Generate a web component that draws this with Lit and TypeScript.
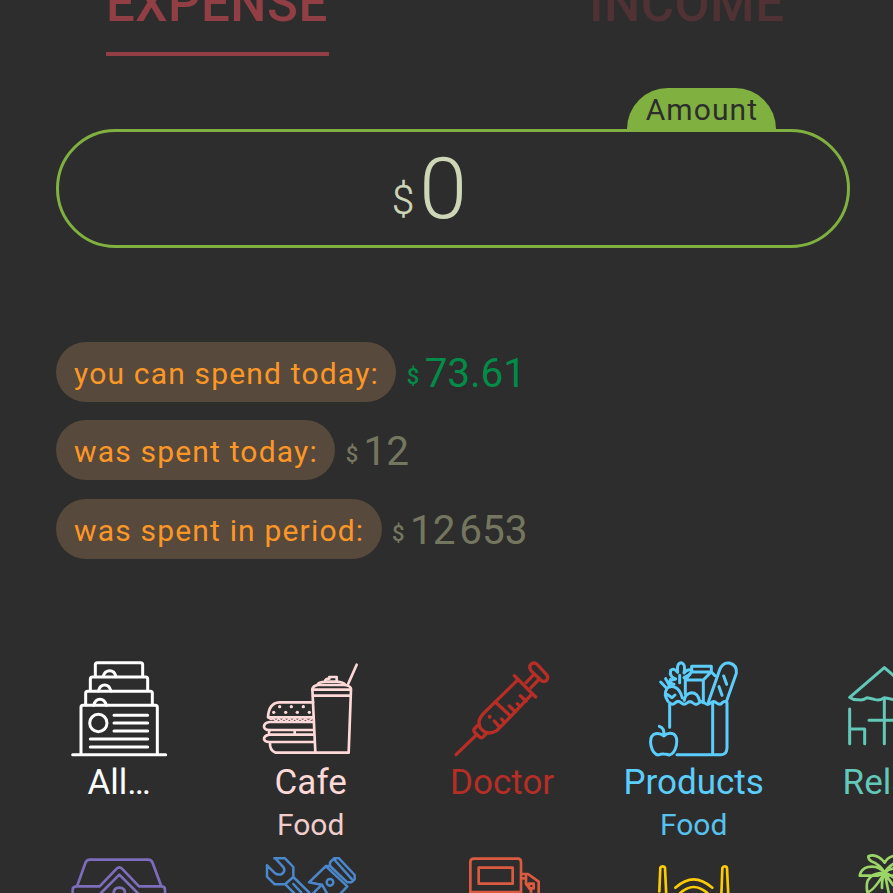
import { LitElement, html, css, svg, type SVGTemplateResult } from "lit";
import { customElement, property } from "lit/decorators.js";

interface Category {
  name: string;
  group?: string;
  color: string;
  box: string;
  icon: SVGTemplateResult;
}

const records = svg`<g stroke-width="9">
  <path d="M38 314H317M63 313V172Q63 166 69 166H286Q292 166 292 172V313"/>
  <path d="M77 164V130Q77 124 83 124H271Q277 124 277 130V164M91 122V87Q91 81 97 81H257Q263 81 263 87V122M106 79V44Q106 38 112 38H242Q248 38 248 44V79"/>
  <path d="M129 80Q134 62 149 62T168 80M115 123Q120 105 134 105T153 123M101 166Q106 148 120 148T139 166"/>
  <circle cx="115" cy="219" r="26"/>
  <path d="M162 196H263M162 219H263M162 243H263M91 267H263M91 291H263"/></g>`;

const cafe = svg`<g stroke-width="8">
  <path d="M190 157H88Q56 159 54 202H190M190 216H58Q42 219 42 230Q44 240 58 240H190M60 240Q52 252 62 254H190M134 241V253M190 254H58Q42 257 42 267Q44 276 58 276H190M60 277Q58 301 77 308H296L303 117Q302 108 286 105Q280 96 260 95H228Q205 96 202 105Q189 108 187 117L196 306"/>
  <path d="M202 105H286M188 119H302M189 137H301M225 94Q226 86 238 86V81H260V94"/>
  <path d="M294 103L320 44"/>
  <path stroke-width="5" d="M56 204Q63 211 70 205Q78 218 86 205Q94 218 102 205Q110 218 118 205Q126 218 134 205Q142 218 150 205Q158 218 166 205Q174 218 186 205"/>
  <g fill="currentColor" stroke="none"><circle cx="89" cy="170" r="5"/><circle cx="124" cy="170" r="5"/><circle cx="160" cy="170" r="5"/><circle cx="71" cy="187" r="5"/><circle cx="107" cy="187" r="5"/><circle cx="142" cy="187" r="5"/><circle cx="178" cy="187" r="5"/></g></g>`;

const syringe = svg`<g stroke-width="10">
  <path d="M47 314L107 256M111 227L101 238Q99 242 102 246L118 261Q123 265 128 261L138 251"/>
  <path d="M233 89L132 188Q108 210 120 234Q139 259 169 242Q178 235 276 131M222 77L286 141"/>
  <path d="M165 156L208 196M257 98L281 73M272 113L297 87"/>
  <path d="M270 58Q265 47 274 41Q283 36 291 44L318 73Q326 82 319 91Q310 98 301 90L274 64Z"/>
  <path d="M162 213L176 229M184 207L190 214M207 168L225 185M231 161L237 167M240 137L257 153"/>
  <circle cx="148" cy="200" r="6" fill="currentColor" stroke="none"/></g>`;

const groceries = svg`<g stroke-width="9">
  <path d="M104 232V158Q112 167 120 159Q129 150 138 158Q147 167 156 159Q165 151 174 159Q183 167 192 159Q200 151 209 159Q218 167 227 159Q236 151 245 159Q254 167 262 158Q269 151 276 158V294Q275 314 258 314H126M233 160V314"/>
  <path d="M151 131V90L170 65V49H229V65L205 90V158M151 90H205M171 66H229L240 77"/>
  <path d="M220 157L254 59Q263 36 283 39Q307 45 304 70L274 155M266 78L275 103M252 110L261 136"/>
  <path d="M99 154Q84 133 97 114Q108 106 122 113Q135 119 142 144M96 133L111 143L120 135M95 115L77 96M106 111L92 86M102 106L107 88"/>
  <path d="M117 103Q108 103 105 92L122 87Q102 80 107 61Q116 52 128 67Q124 39 139 38Q153 42 147 69Q160 54 171 62M134 76V98M147 83L165 73"/>
  <path d="M148 151Q149 132 169 128Q189 128 194 154"/>
  <path d="M86 258Q73 246 56 253Q43 263 48 287Q54 313 70 315Q79 311 86 312Q94 312 103 315Q118 312 124 287Q129 261 116 252Q101 245 86 258ZM86 256Q90 235 73 229"/></g>`;

const patio = svg`<g stroke-width="9">
  <path d="M111 142L215 53L319 142Q310 153 294 149Q281 144 267 143Q250 153 241 149Q228 144 215 143Q202 153 188 149Q173 144 163 143Q148 153 137 149Q121 150 111 142ZM215 145V281M169 211H261M111 177V281M111 237H156V281M319 177V281M319 237H274V281"/></g>`;

const pillow = svg`<g stroke-width="8">
  <path d="M51 379L75 312Q79 299 90 299H264Q274 299 278 309L304 379M51 379H119L170 326Q178 318 186 326L237 379H304Q315 379 315 389V402M51 379Q38 379 38 389V402M123 399L178 344L233 399M161 400Q161 383 178 383T195 400"/></g>`;

const tools = svg`<g stroke-width="7.5">
  <path d="M643 294H675L700 320V350L748 397M621 315L643 337Q653 345 664 342Q674 336 673 327Q672 321 664 314L646 294M621 315V349L644 372H676L720 416M676 371L700 350M700 371L724 397"/>
  <path d="M810 306L822 294H837L884 344V357L874 366H862L810 317ZM824 299L876 357M810 317H798L747 366L773 371L786 373M798 318L862 378L842 399M786 373L801 399M786 373L756 402"/>
  <circle cx="810" cy="366" r="10"/></g>`;

const fuel = svg`<g stroke-width="8">
  <path d="M91 412V306Q91 295 102 295H234Q243 295 243 306V412M91 395H243M116 322H218V370H116ZM246 341H264L296 364V410M246 354H258V341M258 354V371L273 390V415M266 370H281V384H269Z"/></g>`;

const router = svg`<g stroke-width="8">
  <path d="M658 393L661 322Q663 318 668 318Q674 318 675 323L679 408M844 408L847 323Q849 318 854 318Q860 318 861 323L865 408M706 382Q735 357 761 357T817 382M720 399Q740 380 761 380T803 399"/></g>`;

const palm = svg`<g stroke-width="8">
  <path d="M216 668Q202 644 176 634Q164 625 168 618Q194 610 216 638Q228 615 258 617Q267 628 251 637Q226 649 216 668M216 668Q197 645 166 651Q145 656 141 677H197L216 668M216 668Q176 669 165 692Q160 707 164 726Q180 727 216 668M216 668Q207 686 208 714M216 668L228 728M216 668Q246 640 288 677H232L216 668M216 668Q256 680 266 725Q252 725 216 668"/></g>`;

const categories: Category[] = [
  { name: "All…", color: "#ffffff", box: "33 33 288 288", icon: records },
  { name: "Cafe", group: "Food", color: "#ffd9d8", box: "39 33 288 288", icon: cafe },
  { name: "Doctor", color: "#b62e26", box: "41 33 288 288", icon: syringe },
  { name: "Products", group: "Food", color: "#5bcdfe", box: "33 33 288 288", icon: groceries },
  { name: "Relax", color: "#62c8b9", box: "73 33 288 288", icon: patio },
  { name: "Home", color: "#7d6ebc", box: "33 288 288 288", icon: pillow },
  { name: "Repair", color: "#4a87cb", box: "609 287 288 288", icon: tools },
  { name: "Fuel", color: "#dc5b40", box: "42 287 288 288", icon: fuel },
  { name: "Internet", color: "#fecb00", box: "618 287 288 288", icon: router },
  { name: "Travel", color: "#9cd567", box: "73 618 288 288", icon: palm },
];

@customElement("category-tile")
class CategoryTile extends LitElement {
  @property({ attribute: false }) item!: Category;

  static styles = css`
    :host { display: flex; flex-direction: column; align-items: center; height: 195px; white-space: nowrap; }
    .icon { width: 96px; height: 96px; overflow: visible; fill: none; stroke: currentColor; stroke-linecap: round; stroke-linejoin: round; flex: none; }
    .name { font-size: 35px; line-height: 42px; margin-top: 5px; }
    .group { font-size: 30px; line-height: 36px; margin-top: 3px; opacity: 0.93; }
  `;

  render() {
    return html`<svg class="icon" viewBox=${this.item.box}>${this.item.icon}</svg>
      <div class="name">${this.item.name}</div>
      ${this.item.group ? html`<div class="group">${this.item.group}</div>` : null}`;
  }
}

@customElement("app-root")
class AppRoot extends LitElement {
  static styles = css`
    :host { display: block; width: 893px; height: 893px; overflow: hidden; background: #2d2d2d; font-family: Roboto, sans-serif; }
    .tabs { display: flex; height: 56px; box-sizing: border-box; padding-left: 106px; font-weight: 500; font-size: 51px; line-height: 60px; letter-spacing: 0.5px; color: #913e44; }
    .tab { flex: none; height: 56px; box-sizing: border-box; display: flex; align-items: flex-end; padding-bottom: 22px; }
    .active { width: 223px; border-bottom: 4px solid #913e44; padding-bottom: 18px; }
    .muted { margin-left: 260px; color: #503235; }
    .amount { width: 794px; margin: 32px 0 0 56px; }
    .caption { width: 149px; height: 41px; margin-left: 571.4px; box-sizing: border-box; border-radius: 41px 41px 0 0; background: #80b140; color: #2d2d2d; font-size: 30px; line-height: 44px; letter-spacing: 1.1px; text-align: center; }
    .field { height: 119px; box-sizing: border-box; border: 3px solid #80b140; border-radius: 60px; display: flex; align-items: baseline; padding-left: 333px; color: #ced6b8; font-weight: 300; line-height: 113px; }
    .cur { font-size: 40px; margin-right: 5px; align-self: flex-start; line-height: 138px; height: 100px; -webkit-text-stroke: 0.4px; }
    .zero { font-size: 86px; }
    .stats { display: flex; flex-direction: column; gap: 18.4px; margin: 94px 0 0 56px; }
    .stat { display: flex; align-items: flex-start; height: 60px; }
    .label { height: 60px; line-height: 63px; padding: 0 17.5px 0 18px; border-radius: 30px; background: #57493b; color: #ff9726; font-size: 30px; letter-spacing: 1.18px; }
    .value { display: flex; align-items: flex-start; margin-left: 10.3px; color: #75765f; font-size: 40.5px; line-height: 63px; letter-spacing: -0.1px; }
    .good { color: #008b48; }
    .sign { font-size: 22px; font-weight: 500; line-height: 70px; margin-right: 5.5px; }
    .grid { display: grid; grid-template-columns: repeat(5, 191.5px); margin: 102px 0 0 23.4px; }
  `;

  private stat(label: string, value: string, good = false) {
    return html`<div class="stat">
      <span class="label">${label}</span>
      <span class="value ${good ? "good" : ""}"><span class="sign">$</span><span>${value}</span></span>
    </div>`;
  }

  render() {
    return html`
      <div class="tabs"><div class="tab active">EXPENSE</div><div class="tab muted">INCOME</div></div>
      <div class="amount">
        <div class="caption">Amount</div>
        <div class="field"><span class="cur">$</span><span class="zero">0</span></div>
      </div>
      <div class="stats">
        ${this.stat("you can spend today:", "73.61", true)}
        ${this.stat("was spent today:", "12")}
        ${this.stat("was spent in period:", "12\u200a653")}
      </div>
      <div class="grid">${categories.map((c) => html`<category-tile style="color:${c.color}" .item=${c}></category-tile>`)}</div>
    `;
  }
}
